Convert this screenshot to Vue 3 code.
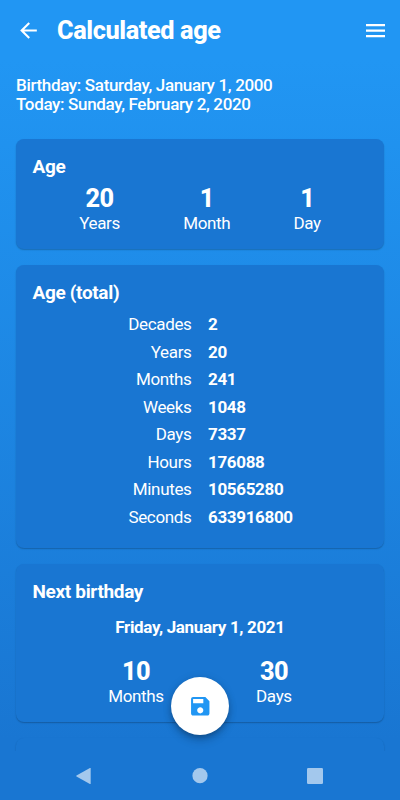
<template>
  <div class="screen">
    <header class="toolbar">
      <svg class="back" viewBox="0 0 24 24" @click="goBack">
        <path d="M20 11H7.83l5.59-5.59L12 4l-8 8 8 8 1.41-1.41L7.83 13H20v-2z" />
      </svg>
      <h1>Calculated age</h1>
      <svg class="menu" viewBox="0 0 19 14">
        <path d="M0 0h19v2.3H0zM0 5.5h19v2.3H0zM0 11h19v2.3H0z" />
      </svg>
    </header>

    <main class="content">
      <div class="dates">
        <div>Birthday: Saturday, January 1, 2000</div>
        <div>Today: Sunday, February 2, 2020</div>
      </div>

      <section class="card age">
        <h2>Age</h2>
        <div class="stats">
          <div v-for="item in age" :key="item.label" class="stat">
            <strong>{{ item.value }}</strong>
            <span>{{ item.label }}</span>
          </div>
        </div>
      </section>

      <section class="card total">
        <h2>Age (total)</h2>
        <div class="rows">
          <div v-for="row in totals" :key="row.label" class="row">
            <span class="label">{{ row.label }}</span>
            <span class="value">{{ row.value }}</span>
          </div>
        </div>
      </section>

      <section class="card next">
        <h2>Next birthday</h2>
        <div class="next-date">Friday, January 1, 2021</div>
        <div class="stats">
          <div v-for="item in nextBirthday" :key="item.label" class="stat">
            <strong>{{ item.value }}</strong>
            <span>{{ item.label }}</span>
          </div>
        </div>
      </section>

      <section class="card peek"></section>
    </main>

    <button class="fab" aria-label="Save">
      <svg viewBox="0 0 24 24">
        <path d="M17 3H5c-1.11 0-2 .9-2 2v14c0 1.1.89 2 2 2h14c1.1 0 2-.9 2-2V7l-4-4zm-5 16c-1.66 0-3-1.34-3-3s1.34-3 3-3 3 1.34 3 3-1.34 3-3 3zm3-10H5V5h10v4z" />
      </svg>
    </button>

    <nav class="navbar">
      <svg viewBox="0 0 18 18"><path d="M15.7 1.6v14.8q0 .9-.8.5L1.5 9.5q-.8-.5 0-1L14.9 1.1q.8-.4.8.5z" /></svg>
      <svg viewBox="0 0 18 18"><circle cx="9" cy="8.7" r="7.6" /></svg>
      <svg viewBox="0 0 18 18"><rect x="1" y="1" width="16" height="16" rx="1.2" /></svg>
    </nav>
  </div>
</template>

<script setup>
const age = [
  { value: 20, label: 'Years' },
  { value: 1, label: 'Month' },
  { value: 1, label: 'Day' },
];

const totals = [
  { label: 'Decades', value: 2 },
  { label: 'Years', value: 20 },
  { label: 'Months', value: 241 },
  { label: 'Weeks', value: 1048 },
  { label: 'Days', value: 7337 },
  { label: 'Hours', value: 176088 },
  { label: 'Minutes', value: 10565280 },
  { label: 'Seconds', value: 633916800 },
];

const nextBirthday = [
  { value: 10, label: 'Months' },
  { value: 30, label: 'Days' },
];

const goBack = () => window.history.back();
</script>

<style>
body {
  margin: 0;
  background: #1976d2;
}
</style>

<style scoped>
.screen {
  position: relative;
  display: flex;
  flex-direction: column;
  height: 800px;
  overflow: hidden;
  color: #fff;
  font-family: Roboto, sans-serif;
  font-size: 17px;
  line-height: 19.4px;
  letter-spacing: -0.34px;
  background: linear-gradient(#2196f3 0, #2196f3 60px, #1976d2 740px);
}
.toolbar {
  display: flex;
  align-items: center;
  box-sizing: border-box;
  height: 61px;
  padding: 0 15px 0 16px;
  flex: none;
}
.toolbar svg {
  fill: #fff;
}
.back {
  width: 25px;
  height: 25px;
}
.menu {
  width: 19px;
  height: 14px;
  margin-left: auto;
}
h1 {
  margin: 0 0 0 16px;
  font-size: 25.3px;
  line-height: 30px;
  font-weight: 800;
  letter-spacing: -0.4px;
}
.content {
  display: flex;
  flex-direction: column;
  gap: 16px;
  flex: 1;
  min-height: 0;
  padding: 15px 16px 0;
  overflow: hidden;
}
.dates {
  flex: none;
  height: 47px;
  font-weight: 500;
}
.card {
  flex: none;
  box-sizing: border-box;
  padding-top: 16px;
  border-radius: 8px;
  background: #1976d2;
  box-shadow: 0 1px 1.5px rgba(0, 0, 0, 0.24);
}
h2 {
  margin: 0 0 0 16.5px;
  font-size: 19px;
  line-height: 23px;
  font-weight: 700;
}
.age {
  height: 110px;
}
.total {
  height: 282.5px;
}
.next {
  height: 158px;
}
.peek {
  height: 100px;
}
.stats {
  display: flex;
  justify-content: space-evenly;
  margin-top: 6px;
}
.stat {
  display: flex;
  flex-direction: column;
  align-items: center;
}
.stat strong {
  font-size: 25.3px;
  line-height: 29.5px;
  font-weight: 800;
  letter-spacing: -0.6px;
}
.rows {
  margin-top: 7px;
}
.row {
  display: grid;
  grid-template-columns: 175.5px 1fr;
  column-gap: 16.5px;
  line-height: 27.55px;
}
.label {
  text-align: right;
}
.value {
  font-weight: 700;
}
.next-date {
  margin-top: 15.5px;
  text-align: center;
  font-weight: 700;
}
.next .stats {
  margin-top: 20px;
}
.fab {
  position: absolute;
  left: 171px;
  top: 677px;
  display: flex;
  align-items: center;
  justify-content: center;
  width: 58px;
  height: 58px;
  padding: 0;
  border: 0;
  border-radius: 50%;
  background: #fff;
  box-shadow: 0 3px 5px -1px rgba(0, 0, 0, 0.2), 0 6px 10px rgba(0, 0, 0, 0.14), 0 1px 10px rgba(0, 0, 0, 0.1);
}
.fab svg {
  width: 24.5px;
  height: 24.5px;
  fill: #2196f3;
}
.navbar {
  display: flex;
  align-items: center;
  justify-content: space-between;
  flex: none;
  box-sizing: border-box;
  height: 49px;
  padding: 0 76px 0 75px;
  background: #1976d2;
}
.navbar svg {
  width: 18px;
  height: 18px;
  fill: #a3c8ed;
}
</style>
